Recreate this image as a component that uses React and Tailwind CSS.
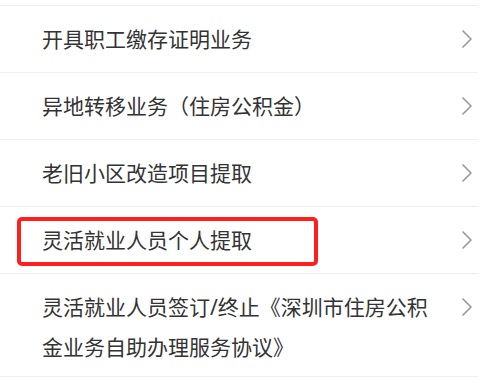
import React from "react";

const ROWS = [
  { title: "开具职工缴存证明业务" },
  { title: "异地转移业务（住房公积金）" },
  { title: "老旧小区改造项目提取" },
  { title: "灵活就业人员个人提取", marked: true },
  { title: "灵活就业人员签订/终止《深圳市住房公积金业务自助办理服务协议》", tall: true },
];

const Chevron = () => (
  <svg width="12" height="20" viewBox="0 0 12 20" fill="none">
    <polyline points="2,2 10,10 2,18" stroke="#9a9a9a" strokeWidth="1.7" strokeLinecap="round" strokeLinejoin="round" />
  </svg>
);

export default function App() {
  return (
    <div
      className="w-[500px] h-[380px] bg-white overflow-hidden text-[#333]"
      style={{ fontFamily: '"Noto Sans", "Noto Sans CJK SC", sans-serif' }}
    >
      <div className="w-[478px] pt-[5px] border-b border-[#efefef]">
        {ROWS.map((row) => (
          <div
            key={row.title}
            className={`relative flex items-center justify-between border-t border-[#efefef] pl-[42px] pr-[5px] ${row.tall ? "h-[103px] items-start pt-[13px]" : "h-[67px]"}`}
          >
            <span className={`text-[21px] ${row.tall ? "w-[396px] leading-[40px]" : "leading-[30px]"}`}>
              {row.title}
            </span>
            <div className={row.tall ? "pt-[10px]" : ""}>
              <Chevron />
            </div>
            {row.marked && (
              <div className="absolute left-[17px] top-[10px] w-[301px] h-[49px] border-[4px] border-[#ff1f1f] rounded-[5px]" />
            )}
          </div>
        ))}
      </div>
    </div>
  );
}
